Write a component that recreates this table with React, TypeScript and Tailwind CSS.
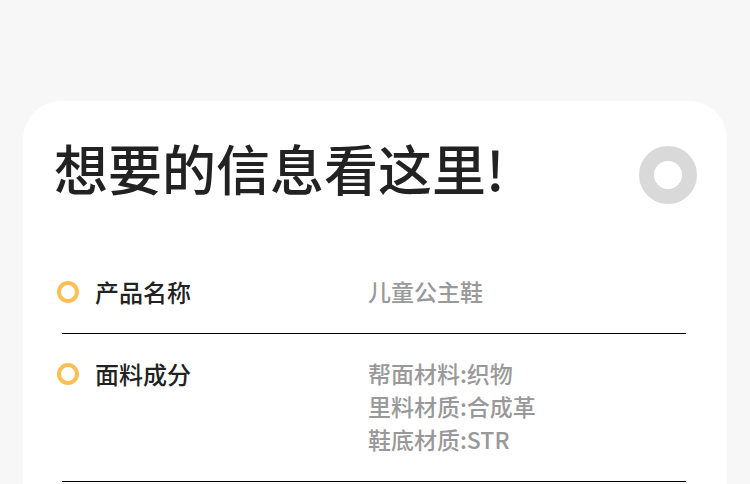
const rows = [
  { label: '产品名称', values: ['儿童公主鞋'] },
  { label: '面料成分', values: ['帮面材料:织物', '里料材质:合成革', '鞋底材质:STR'] },
]

export default function App() {
  return (
    <div
      className="min-h-[484px] bg-[#f7f7f7] pt-[101px] px-[23px] overflow-hidden"
      style={{ fontFamily: '"Noto Sans CJK SC", "Noto Sans", sans-serif' }}
    >
      <div className="bg-white rounded-t-[38px] pb-10">
        {/* header */}
        <div className="flex items-start justify-between pl-[31px] pr-[30px] pt-[36px]">
          <h1 className="text-[54px] leading-[62px] font-medium text-[#222]">想要的信息看这里!</h1>
          <div className="mt-[9px] w-[58px] h-[58px] rounded-full border-[15px] border-[#d9d9d9]" />
        </div>

        {/* info rows */}
        <div className="mt-[48px] ml-[39px] mr-[41px]">
          {rows.map((row) => (
            <div key={row.label} className="flex items-start border-b border-black pt-[23px] pb-[25px]">
              <div className="h-[33px] flex items-center -ml-[5px] mr-[16px]">
                <div className="w-[22px] h-[22px] rounded-full border-[4px] border-[#fbbf55]" />
              </div>
              <div className="w-[273px] text-[24px] leading-[33px] font-medium text-[#222]">{row.label}</div>
              <div className="flex flex-col">
                {row.values.map((v) => (
                  <span key={v} className="text-[23px] leading-[33px] font-medium text-[#999]">
                    {v}
                  </span>
                ))}
              </div>
            </div>
          ))}
        </div>
      </div>
    </div>
  )
}
